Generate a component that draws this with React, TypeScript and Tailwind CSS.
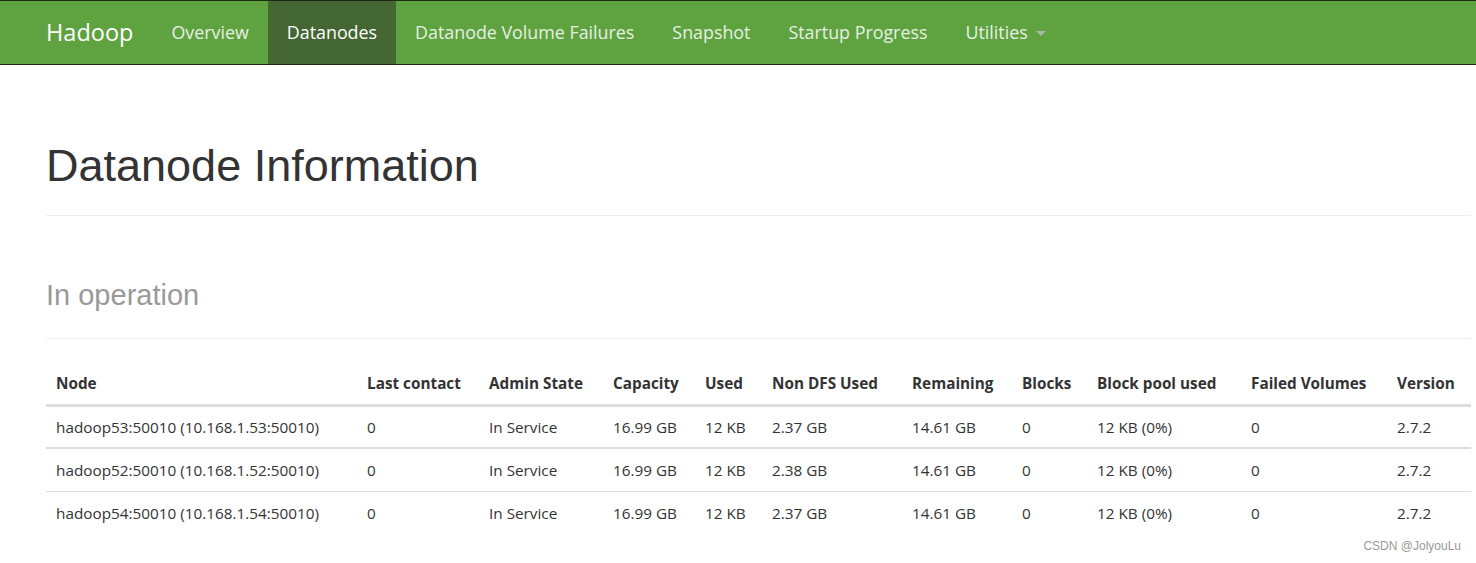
import React from "react";

const cols = [
  { h: "Node", w: 311 },
  { h: "Last contact", w: 122 },
  { h: "Admin State", w: 124 },
  { h: "Capacity", w: 92 },
  { h: "Used", w: 67 },
  { h: "Non DFS Used", w: 140 },
  { h: "Remaining", w: 110 },
  { h: "Blocks", w: 75 },
  { h: "Block pool used", w: 154 },
  { h: "Failed Volumes", w: 146 },
  { h: "Version", w: 84 },
];

const rows = [
  ["hadoop53:50010 (10.168.1.53:50010)", "0", "In Service", "16.99 GB", "12 KB", "2.37 GB", "14.61 GB", "0", "12 KB (0%)", "0", "2.7.2"],
  ["hadoop52:50010 (10.168.1.52:50010)", "0", "In Service", "16.99 GB", "12 KB", "2.38 GB", "14.61 GB", "0", "12 KB (0%)", "0", "2.7.2"],
  ["hadoop54:50010 (10.168.1.54:50010)", "0", "In Service", "16.99 GB", "12 KB", "2.37 GB", "14.61 GB", "0", "12 KB (0%)", "0", "2.7.2"],
];

const navItems = ["Overview", "Datanodes", "Datanode Volume Failures", "Snapshot", "Startup Progress"];

export default function App() {
  return (
    <div className="relative min-h-[563px] bg-white">
      <nav className="flex h-[65px] items-stretch border-y border-[#1b2a14] bg-[#5fa341] pl-[27px] font-['Open_Sans',sans-serif]">
        <div className="flex items-center px-[19px] text-[23.5px] text-white">Hadoop</div>
        {navItems.map((n) => (
          <div
            key={n}
            className={
              n === "Datanodes"
                ? "flex items-center bg-[#446633] px-[19px] text-[17.85px] text-white"
                : "flex items-center px-[19px] text-[17.85px] text-[#e6f0e2]"
            }
          >
            {n}
          </div>
        ))}
        <div className="flex items-center px-[19px] text-[17.85px] text-[#e6f0e2]">
          Utilities
          <span className="ml-[8px] mt-[2px] inline-block h-0 w-0 border-x-[5px] border-t-[5px] border-x-transparent border-t-[#a9b9a2]" />
        </div>
      </nav>

      <main className="pl-[46px] pr-[5px]">
        <div className="mt-[76px] border-b border-[#eeeeee] pb-[24px]">
          <h1 className="font-['Liberation_Sans',Arial,sans-serif] text-[45px] leading-[1.1] text-[#333333]">
            Datanode Information
          </h1>
        </div>
        <div className="mt-[64px] border-b border-[#eeeeee] pb-[27px]">
          <h2 className="font-['Liberation_Sans',Arial,sans-serif] text-[29px] leading-[1.1] text-[#999999]">
            In operation
          </h2>
        </div>

        <table className="mt-[23px] w-[1425px] table-fixed border-collapse font-['Open_Sans',sans-serif] text-[15.3px] text-[#333333]">
          <colgroup>
            {cols.map((c) => (
              <col key={c.h} style={{ width: c.w }} />
            ))}
          </colgroup>
          <thead>
            <tr className="border-b-[3px] border-[#dddddd]">
              {cols.map((c) => (
                <th key={c.h} className="h-[43px] px-[10px] text-left font-bold whitespace-nowrap">
                  {c.h}
                </th>
              ))}
            </tr>
          </thead>
          <tbody>
            {rows.map((r, i) => (
              <tr key={i} className={i < 2 ? (i === 0 ? "border-b-2 border-[#dddddd]" : "border-b border-[#dddddd]") : ""}>
                {r.map((c, j) => (
                  <td key={j} className="h-[43px] px-[10px] whitespace-nowrap">
                    {c}
                  </td>
                ))}
              </tr>
            ))}
          </tbody>
        </table>
      </main>

      <div className="absolute bottom-[8px] right-[15px] font-['Liberation_Sans',Arial,sans-serif] text-[12px] text-[#999999]">
        CSDN @JolyouLu
      </div>
    </div>
  );
}
